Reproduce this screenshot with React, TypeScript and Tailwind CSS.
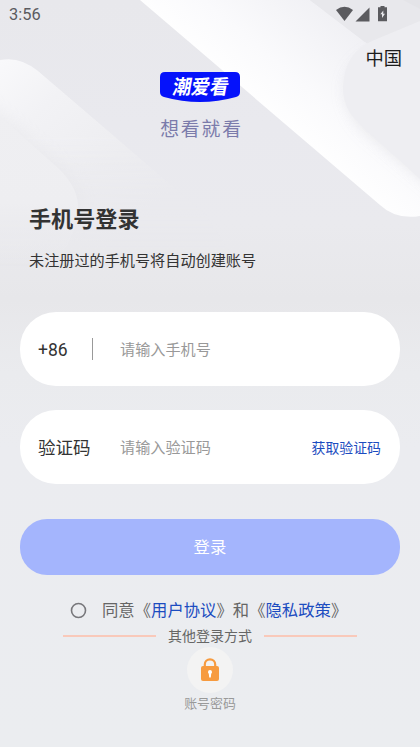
import { useState } from 'react';

function Backdrop() {
  return (
    <svg className="absolute inset-0 h-full w-full" viewBox="0 0 420 747" preserveAspectRatio="none" aria-hidden="true">
      <defs>
        <linearGradient id="base" x1="0" y1="0" x2="0" y2="747" gradientUnits="userSpaceOnUse">
          <stop offset="0" stopColor="#e8e8ec" />
          <stop offset="0.17" stopColor="#e9e9ee" />
          <stop offset="0.3" stopColor="#eaeaee" />
          <stop offset="0.4" stopColor="#e7e7ea" />
          <stop offset="0.5" stopColor="#eaebee" />
          <stop offset="0.6" stopColor="#ebecf0" />
          <stop offset="1" stopColor="#ebedf0" />
        </linearGradient>
        <linearGradient id="beam" x1="240" y1="100" x2="325" y2="0" gradientUnits="userSpaceOnUse">
          <stop offset="0" stopColor="#ffffff" />
          <stop offset="0.4" stopColor="#fafafc" />
          <stop offset="1" stopColor="#f0f0f4" />
        </linearGradient>
        <linearGradient id="ribbon" x1="0" y1="60" x2="140" y2="220" gradientUnits="userSpaceOnUse">
          <stop offset="0" stopColor="#f9f9fb" />
          <stop offset="0.3" stopColor="#f2f2f5" />
          <stop offset="0.7" stopColor="#ededf0" />
          <stop offset="1" stopColor="#eaeaee" />
        </linearGradient>
        <linearGradient id="leaf" x1="0" y1="110" x2="0" y2="265" gradientUnits="userSpaceOnUse">
          <stop offset="0" stopColor="#efeff2" />
          <stop offset="0.6" stopColor="#eeeef1" />
          <stop offset="1" stopColor="#eaeaee" stopOpacity="0" />
        </linearGradient>
        <linearGradient id="fade" x1="0" y1="60" x2="0" y2="270" gradientUnits="userSpaceOnUse">
          <stop offset="0.35" stopColor="#fff" />
          <stop offset="1" stopColor="#000" />
        </linearGradient>
        <mask id="ribbonMask" maskUnits="userSpaceOnUse" x="0" y="0" width="420" height="300">
          <path fill="url(#fade)" d="M0 60Q20 56 38 71L205 214L245 275H0Z" />
        </mask>
        <filter id="soft" x="-30%" y="-30%" width="160%" height="160%">
          <feGaussianBlur stdDeviation="9" />
        </filter>
        <clipPath id="beamShape">
          <path d="M140 0H310L420 84V216Q396 220 380 205Z" />
        </clipPath>
      </defs>
      <path fill="url(#base)" d="M0 0H420V747H0Z" />
      <g mask="url(#ribbonMask)">
        <path fill="url(#ribbon)" d="M0 50H260V280H0Z" />
        <path fill="#dfdfe3" filter="url(#soft)" opacity="0.45" d="M-30 90L60 167Q80 185 80 205Q77 225 60 235H-30Z" />
      </g>
      <path fill="url(#leaf)" d="M0 116L58 168Q77 186 78 205Q77 240 52 265H0Z" />
      <path fill="url(#beam)" d="M140 0H310L420 84V216Q396 220 380 205Z" />
      <g clipPath="url(#beamShape)">
        <path
          fill="#d2d2d9"
          filter="url(#soft)"
          opacity="0.75"
          d="M450 35L385 52Q352 65 350 88Q350 108 366 126L450 196Z"
        />
      </g>
      <path fill="#e8e8ec" d="M310 0H420V25L365 42Z" />
      <path fill="#e4e4e8" d="M403 0H420V9Z" />
      <path fill="#eeeef2" d="M420 21L372 41Q344 53 343 88Q343 108 358 122L420 179Z" />
    </svg>
  );
}

function StatusBar() {
  return (
    <div className="flex h-[30px] items-center justify-between pr-[32px] pl-[9px] text-[#5b5b5f]">
      <span className="text-[16.4px] leading-none">3:56</span>
      <svg className="mt-[-2px] h-[16px] w-[53px]" viewBox="0 0 53 16" fill="currentColor">
        <path d="M1 4Q9.500-2.500 18 4L9.500 15Z" />
        <path d="M34.500 1.500V15.500H20.500Z" />
        <path
          fillRule="evenodd"
          d="M45.500 0H49.500V1.300H52V15.200H43V1.300H45.500ZM48.300 4.500L45.300 8.300H47V12L50 7.700H48.300Z"
        />
      </svg>
    </div>
  );
}

function Logo() {
  return (
    <svg className="h-[30px] w-20" viewBox="0 0 80 30">
      <path fill="#0512fb" d="M5 0H75Q80 0 80 5V20Q80 24 76 25Q40 35 4 25Q0 24 0 20V5Q0 0 5 0Z" />
      <text
        x="11.500"
        y="21.500"
        fill="#fff"
        fontSize="20"
        fontWeight="700"
        fontFamily="'Noto Sans CJK SC', sans-serif"
        textLength="56"
        lengthAdjust="spacingAndGlyphs"
        transform="translate(4 0) skewX(-10)"
      >
        潮爱看
      </text>
    </svg>
  );
}

function LockIcon() {
  return (
    <svg className="h-6 w-5" viewBox="0 0 20 24" fill="none">
      <path d="M4.800 9V6.500A5.200 5.200 0 0 1 15.200 6.500V9" stroke="#f79b3f" strokeWidth="2.200" />
      <rect x="1" y="8" width="18" height="15" rx="2" fill="#f79b3f" />
      <path d="M8 14A2 2 0 1 1 12 14Q12 15 11.200 15.700L10.800 19.500H9.200L8.800 15.700Q8 15 8 14Z" fill="#fff" />
    </svg>
  );
}

export default function App() {
  const [agreed, setAgreed] = useState(false);

  return (
    <div className="relative h-[747px] w-full overflow-hidden bg-[#ebedf0] font-[Roboto,'Noto_Sans_CJK_SC',sans-serif] text-[#333]">
      <Backdrop />
      <div className="relative flex h-full flex-col">
        <StatusBar />

        <header className="flex flex-col">
          <div className="flex h-[42px] justify-end pt-[16px] pr-[18px]">
            <span className="text-[18.3px] leading-[26px] text-[#1c1c1c]">中国</span>
          </div>
          <div className="flex w-[400px] flex-col items-center">
            <Logo />
            <p className="mt-[14px] pl-[3px] text-[18.800px] leading-[28px] tracking-[1.900px] text-[#7b7bab]">想看就看</p>
          </div>
        </header>

        <main className="flex flex-col px-5">
          <h1 className="mt-[59px] pl-[9px] text-[22.100px] leading-[32px] font-bold">手机号登录</h1>
          <p className="mt-[15px] pl-[9px] text-[15.150px] leading-[22px]">未注册过的手机号将自动创建账号</p>

          <div className="mt-[40px] flex h-[74px] items-center rounded-[36px] bg-white pl-[18px]">
            <span className="w-[54px] pt-[2px] text-[17.500px]">+86</span>
            <span className="h-[22px] w-px bg-[#999]" />
            <span className="ml-[27px] pt-[2px] text-[15.150px] text-[#999]">请输入手机号</span>
          </div>

          <div className="mt-6 flex h-[74px] items-center rounded-[36px] bg-white pr-[19px] pl-[18px]">
            <span className="w-[82px] pt-[2px] text-[17.500px]">验证码</span>
            <span className="pt-[2px] text-[15.150px] text-[#999]">请输入验证码</span>
            <button className="ml-auto pt-[2px] text-[13.900px] text-[#1c4cc0]">获取验证码</button>
          </div>

          <button className="mt-[35px] h-[56px] rounded-[27px] bg-[#a4b5fd] pt-[2px] text-[16.400px] text-white">登录</button>
        </main>

        <footer className="flex flex-col items-center text-[#666]">
          <div className="mt-[24px] flex w-full items-center pl-[70px] text-[16.350px] leading-6">
            <button className="mr-[15px] mb-[2px]" aria-pressed={agreed} onClick={() => setAgreed(!agreed)}>
              <svg className="h-[17px] w-[17px]" viewBox="0 0 17 17">
                <circle cx="8.500" cy="8.500" r="7" fill="none" stroke="#77777b" strokeWidth="1.600" />
                {agreed && <circle cx="8.500" cy="8.500" r="4" fill="#1c4cc0" />}
              </svg>
            </button>
            <span className="whitespace-nowrap">
              同意《<a className="text-[#1c4cc0]">用户协议</a>》和《<a className="text-[#1c4cc0]">隐私政策</a>》
            </span>
          </div>
          <div className="mt-[3px] flex items-center gap-[12px]">
            <span className="h-[1.500px] w-[93px] bg-[#f9c9ba]" />
            <span className="text-[14px] leading-5">其他登录方式</span>
            <span className="h-[1.500px] w-[93px] bg-[#f9c9ba]" />
          </div>
          <button className="mt-px flex h-[46px] w-[46px] items-center justify-center rounded-full bg-[#f3f3f3]">
            <LockIcon />
          </button>
          <span className="mt-px text-[12.900px] leading-5 text-[#999]">账号密码</span>
        </footer>
      </div>
    </div>
  );
}
